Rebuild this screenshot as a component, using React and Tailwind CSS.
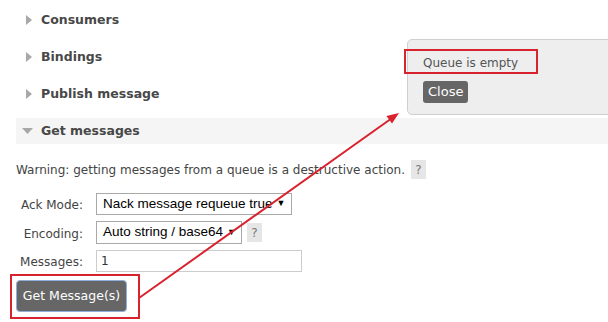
import React from "react";

function RightArrow() {
  return (
    <svg width="6" height="10" viewBox="0 0 6 10" className="shrink-0">
      <path d="M0 0 L6 5 L0 10 Z" fill="#a8a8a8" />
    </svg>
  );
}

function DownArrow() {
  return (
    <svg width="11" height="6" viewBox="0 0 11 6" className="shrink-0">
      <path d="M0 0 L11 0 L5.5 6 Z" fill="#a8a8a8" />
    </svg>
  );
}

function Section({ title }) {
  return (
    <div className="flex items-center h-[26px] pl-[26px] gap-[9px]">
      <RightArrow />
      <span className="font-bold text-[12.5px] text-[#484848] mt-[1px]">{title}</span>
    </div>
  );
}

function FakeSelect({ value, width }) {
  return (
    <div
      className={`flex items-center justify-between h-full border border-[#a9a9a9] bg-white pl-[6px] pr-[6px] font-['Liberation_Sans',Arial,sans-serif] text-[13.5px] text-black ${width}`}
    >
      <span className="whitespace-nowrap">{value}</span>
      <span className="text-[9px] ml-[4px]">▼</span>
    </div>
  );
}

function Help() {
  return (
    <span className="inline-flex items-center justify-center w-[15px] h-[19px] bg-[#e6e6e6] text-[#777] text-[12px]">
      ?
    </span>
  );
}

export default function App() {
  return (
    <div className="relative w-[608px] h-[322px] overflow-hidden bg-white font-['DejaVu_Sans',Verdana,sans-serif] text-[12px] text-[#444]">
      <div className="flex flex-col gap-[11px] pt-[7px]">
        <Section title="Consumers" />
        <Section title="Bindings" />
        <Section title="Publish message" />
        <div className="flex items-center h-[26px] ml-[16px] pl-[6px] gap-[8px] bg-[#f5f5f5]">
          <DownArrow />
          <span className="font-bold text-[12.5px] text-[#484848] mt-[1px]">Get messages</span>
        </div>
      </div>

      <div className="px-[16px]">
        <div className="flex items-center h-[19px] mt-[16px] gap-[6px]">
          <span className="whitespace-nowrap text-[12px]">
            Warning: getting messages from a queue is a destructive action.
          </span>
          <Help />
        </div>

        <div className="flex flex-col gap-[6px] mt-[14px]">
          <div className="flex items-center h-[22px]">
            <span className="w-[67px] text-right mt-[2px]">Ack Mode:</span>
            <div className="ml-[13px] h-full">
              <FakeSelect value="Nack message requeue true" width="w-[196px]" />
            </div>
          </div>
          <div className="flex items-center h-[23px]">
            <span className="w-[67px] text-right mt-[2px]">Encoding:</span>
            <div className="ml-[13px] h-full">
              <FakeSelect value="Auto string / base64" width="w-[146px]" />
            </div>
            <span className="ml-[5px]">
              <Help />
            </span>
          </div>
          <div className="flex items-center h-[22px]">
            <span className="w-[67px] text-right mt-[2px]">Messages:</span>
            <div className="ml-[13px] h-full w-[206px] border border-[#cccccc] bg-white flex items-center pl-[4px] text-[12px] text-[#333]">
              1
            </div>
          </div>
        </div>

        <button className="mt-[8px] w-[111px] h-[32px] rounded-[4px] bg-[#666666] border border-[#8fb0dd] text-white text-[12.5px]">
          Get Message(s)
        </button>
      </div>

      {/* result popup */}
      <div className="absolute left-[407px] top-[39px] w-[220px] h-[76px] bg-[#eeeeee] border border-[#cfcfcf] rounded-[5px] pl-[15px] pt-[15px]">
        <div className="text-[12px] text-[#555] h-[16px] leading-[16px]">Queue is empty</div>
        <button className="mt-[10px] h-[22px] px-[5px] rounded-[3px] bg-[#666666] text-white text-[13px] leading-[22px]">
          Close
        </button>
      </div>

      {/* annotations */}
      <div className="absolute left-[404px] top-[49px] w-[134px] h-[25px] border-2 border-[#d8232f]" />
      <div className="absolute left-[10px] top-[274px] w-[130px] h-[45px] border-2 border-[#d8232f]" />
      <svg className="absolute left-0 top-0 pointer-events-none" width="608" height="322">
        <line x1="139" y1="298" x2="390" y2="119.5" stroke="#d8232f" strokeWidth="2" />
        <path d="M399 113 L392 123.6 L386.4 116 Z" fill="#d8232f" />
      </svg>
    </div>
  );
}
